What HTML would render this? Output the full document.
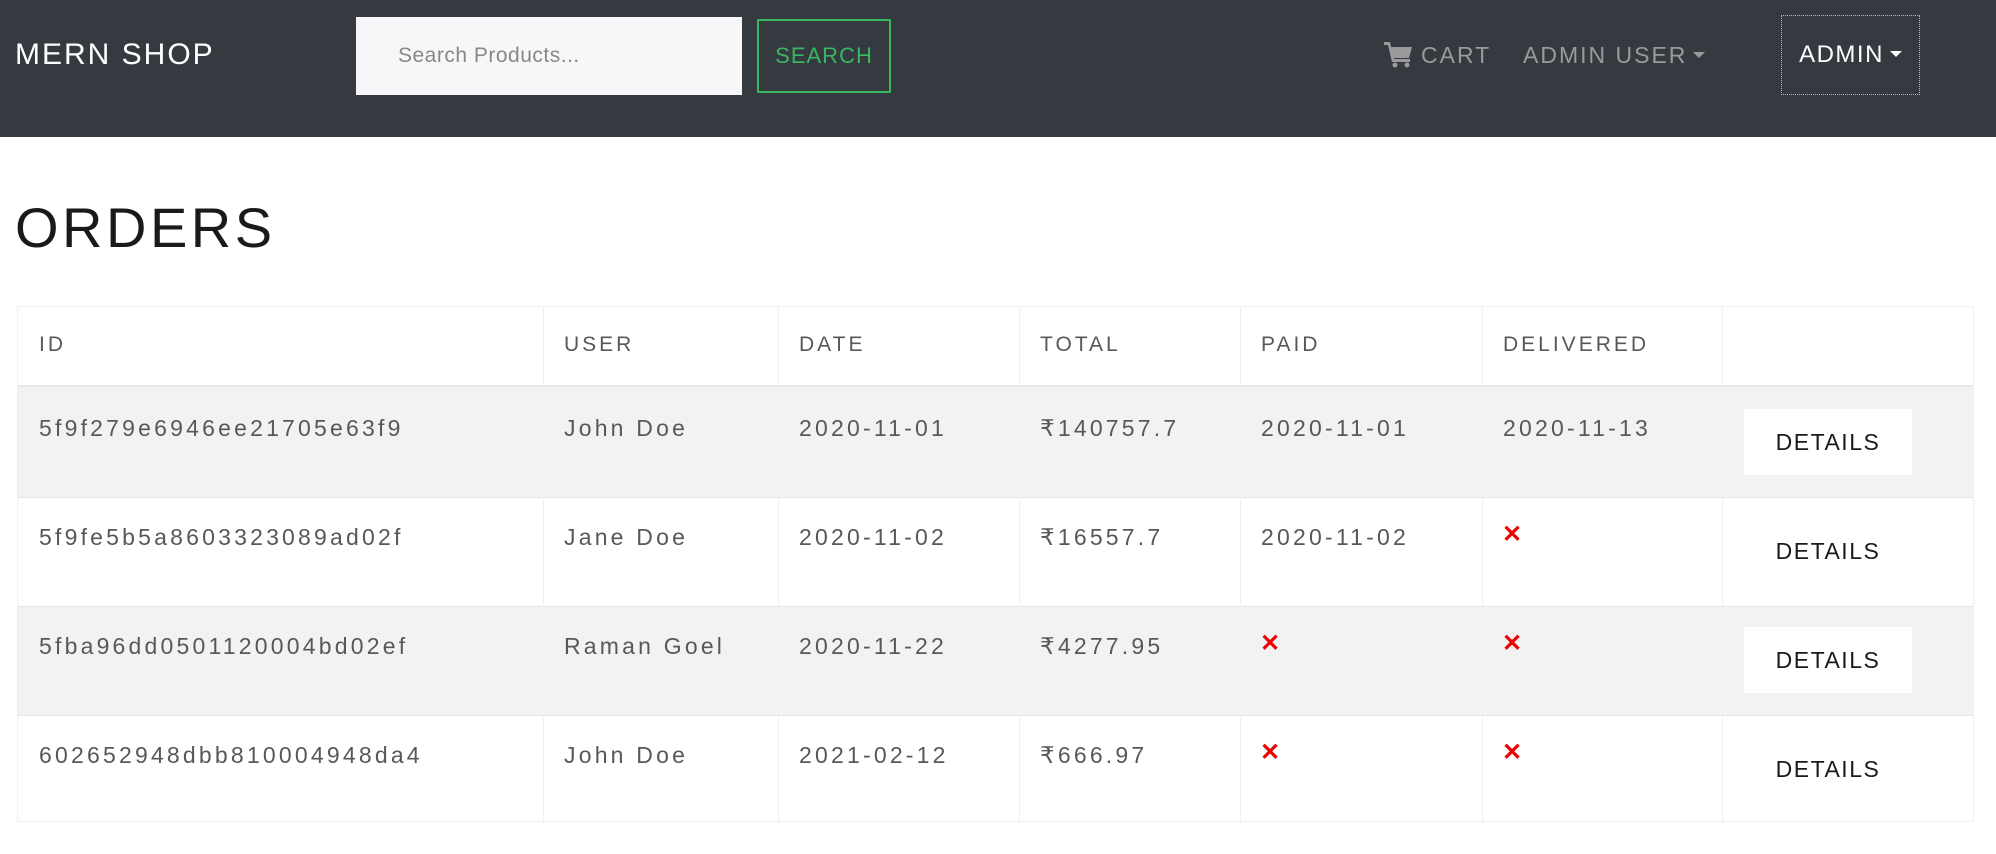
<!DOCTYPE html>
<html><head><meta charset="utf-8"><style>
*{margin:0;padding:0;box-sizing:border-box}
body{width:1996px;height:854px;background:#fff;font-family:"Liberation Sans",sans-serif;position:relative;overflow:hidden}
.nav{position:absolute;left:0;top:0;width:1996px;height:137px;background:#343a40}
.abs{position:absolute;white-space:nowrap}
.brand{left:15px;top:36px;font-size:30px;color:#fff;letter-spacing:2px;line-height:38px}
.search{left:356px;top:17px;width:386px;height:78px;background:#f7f7f9}
.search span{position:absolute;left:42px;top:27px;font-size:21px;color:#888;letter-spacing:0.5px}
.sbtn{left:757px;top:19px;width:134px;height:74px;border:2px solid #3bb55f;color:#3bb55f;font-size:22px;text-align:center;line-height:70px;letter-spacing:1px}
.nl{color:#9a9a9a;font-size:23px;letter-spacing:2px;top:42px;line-height:26px}
.caret{display:inline-block;width:0;height:0;border-left:6px solid transparent;border-right:6px solid transparent;border-top:6px solid currentColor;vertical-align:middle;margin-left:6px;position:relative;top:-2px}
.admin{left:1781px;top:15px;width:139px;height:80px;border:1px dotted #bbb;color:#fff;font-size:24px;letter-spacing:1.5px;line-height:78px;text-align:center}
h1{position:absolute;left:15px;top:195px;font-size:56px;font-weight:normal;letter-spacing:3.5px;color:#1a1a1a;line-height:66px}
.tbl{position:absolute;left:17px;top:306px;width:1957px;height:516px;border:1px solid #f0f0f0}
.row{position:absolute;left:0;width:1955px}
.vl{position:absolute;top:0;height:516px;width:1px;background:#f0f0f0}
.hl{position:absolute;left:0;width:1955px;height:1px;background:#e6e6e6}
.c{position:absolute;color:#55595c;font-size:23px;letter-spacing:3.2px;white-space:nowrap}
.h{font-size:21px;letter-spacing:3px;color:#55595c}
.x{position:absolute;color:#e00;font-size:24px;font-weight:bold}
.det{position:absolute;left:1726px;width:168px;height:66px;text-align:center;line-height:66px;font-size:23px;letter-spacing:1.5px;color:#1a1a1a}
</style></head><body>
<div class="nav"></div>
<div class="abs brand">MERN SHOP</div>
<div class="abs search"><span>Search Products...</span></div>
<div class="abs sbtn">SEARCH</div>
<svg class="abs" style="left:1384px;top:42px" width="29" height="26" viewBox="0 0 29 26"><path d="M0 1h5l1 4h22l-3 11H9L6 4" fill="#9a9a9a"/><path d="M0 0h6l4 17h16v3H8L4 3H0z" fill="#9a9a9a"/><circle cx="11" cy="23" r="2.5" fill="#9a9a9a"/><circle cx="23" cy="23" r="2.5" fill="#9a9a9a"/></svg>
<div class="abs nl" style="left:1421px">CART</div>
<div class="abs nl" style="left:1523px">ADMIN USER<span class="caret"></span></div>
<div class="abs admin">ADMIN<span class="caret"></span></div>
<h1>ORDERS</h1>
<div class="tbl">
<div class="row" style="top:80px;height:110px;background:#f2f2f2"></div>
<div class="row" style="top:299px;height:109px;background:#f2f2f2"></div>
<div class="hl" style="top:78px;height:2px"></div>
<div class="hl" style="top:190px"></div>
<div class="hl" style="top:299px"></div>
<div class="hl" style="top:408px"></div>
<div class="vl" style="left:525px"></div><div class="vl" style="left:760px"></div><div class="vl" style="left:1001px"></div><div class="vl" style="left:1222px"></div><div class="vl" style="left:1464px"></div><div class="vl" style="left:1704px"></div>

<div class="c h" style="left:21px;top:26px">ID</div>
<div class="c h" style="left:546px;top:26px">USER</div>
<div class="c h" style="left:781px;top:26px">DATE</div>
<div class="c h" style="left:1022px;top:26px">TOTAL</div>
<div class="c h" style="left:1243px;top:26px">PAID</div>
<div class="c h" style="left:1485px;top:26px">DELIVERED</div>

<div class="c" style="left:21px;top:108px">5f9f279e6946ee21705e63f9</div>
<div class="c" style="left:546px;top:108px">John Doe</div>
<div class="c" style="left:781px;top:108px">2020-11-01</div>
<div class="c" style="left:1022px;top:108px">₹140757.7</div>
<div class="c" style="left:1243px;top:108px">2020-11-01</div>
<div class="c" style="left:1485px;top:108px">2020-11-13</div>
<div class="det" style="top:102px;background:#fff">DETAILS</div>

<div class="c" style="left:21px;top:217px">5f9fe5b5a8603323089ad02f</div>
<div class="c" style="left:546px;top:217px">Jane Doe</div>
<div class="c" style="left:781px;top:217px">2020-11-02</div>
<div class="c" style="left:1022px;top:217px">₹16557.7</div>
<div class="c" style="left:1243px;top:217px">2020-11-02</div>
<div class="x" style="left:1484px;top:213px">✕</div>
<div class="det" style="top:211px">DETAILS</div>

<div class="c" style="left:21px;top:326px">5fba96dd0501120004bd02ef</div>
<div class="c" style="left:546px;top:326px">Raman Goel</div>
<div class="c" style="left:781px;top:326px">2020-11-22</div>
<div class="c" style="left:1022px;top:326px">₹4277.95</div>
<div class="x" style="left:1242px;top:322px">✕</div>
<div class="x" style="left:1484px;top:322px">✕</div>
<div class="det" style="top:320px;background:#fff">DETAILS</div>

<div class="c" style="left:21px;top:435px">602652948dbb810004948da4</div>
<div class="c" style="left:546px;top:435px">John Doe</div>
<div class="c" style="left:781px;top:435px">2021-02-12</div>
<div class="c" style="left:1022px;top:435px">₹666.97</div>
<div class="x" style="left:1242px;top:431px">✕</div>
<div class="x" style="left:1484px;top:431px">✕</div>
<div class="det" style="top:429px">DETAILS</div>
</div>
</body></html>
